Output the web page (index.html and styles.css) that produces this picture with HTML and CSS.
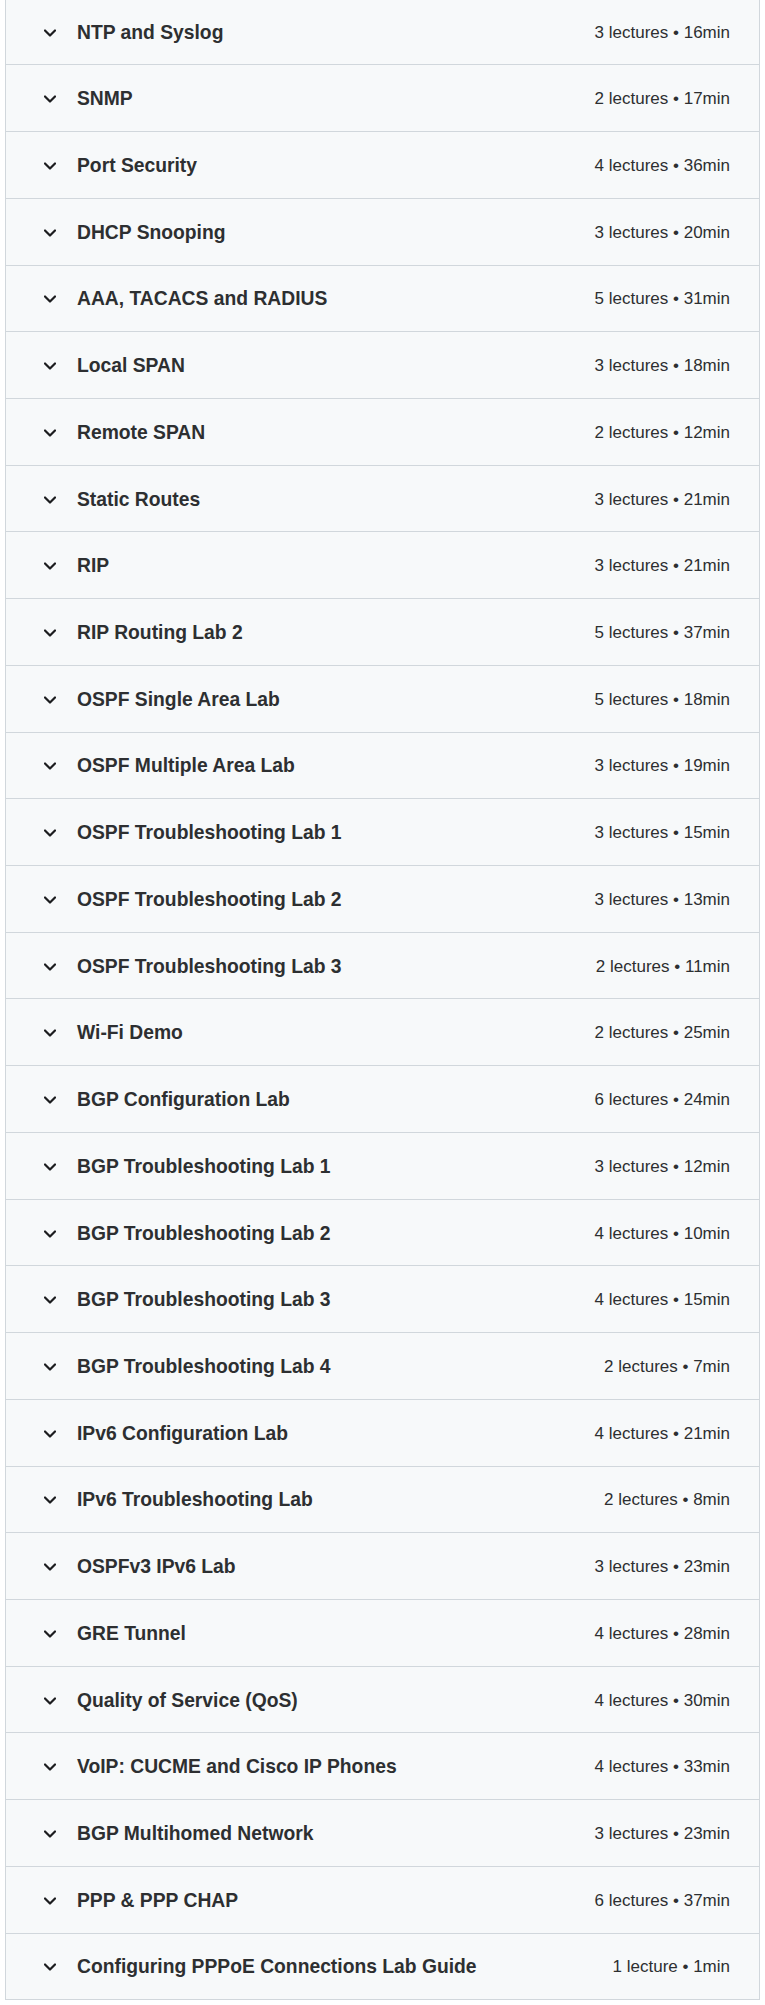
FILE: index.html
```html
<!DOCTYPE html>
<html lang="en">
<head>
<meta charset="utf-8">
<title>Course content</title>
<link rel="stylesheet" href="styles.css">
</head>
<body>
<div class="curriculum">
  <div class="section"><svg class="chev" viewBox="0 0 12 8"><path d="M1 1.5l5 5 5-5"/></svg><span class="title">NTP and Syslog</span><span class="meta">3 lectures • 16min</span></div>
  <div class="section"><svg class="chev" viewBox="0 0 12 8"><path d="M1 1.5l5 5 5-5"/></svg><span class="title">SNMP</span><span class="meta">2 lectures • 17min</span></div>
  <div class="section"><svg class="chev" viewBox="0 0 12 8"><path d="M1 1.5l5 5 5-5"/></svg><span class="title">Port Security</span><span class="meta">4 lectures • 36min</span></div>
  <div class="section"><svg class="chev" viewBox="0 0 12 8"><path d="M1 1.5l5 5 5-5"/></svg><span class="title">DHCP Snooping</span><span class="meta">3 lectures • 20min</span></div>
  <div class="section"><svg class="chev" viewBox="0 0 12 8"><path d="M1 1.5l5 5 5-5"/></svg><span class="title">AAA, TACACS and RADIUS</span><span class="meta">5 lectures • 31min</span></div>
  <div class="section"><svg class="chev" viewBox="0 0 12 8"><path d="M1 1.5l5 5 5-5"/></svg><span class="title">Local SPAN</span><span class="meta">3 lectures • 18min</span></div>
  <div class="section"><svg class="chev" viewBox="0 0 12 8"><path d="M1 1.5l5 5 5-5"/></svg><span class="title">Remote SPAN</span><span class="meta">2 lectures • 12min</span></div>
  <div class="section"><svg class="chev" viewBox="0 0 12 8"><path d="M1 1.5l5 5 5-5"/></svg><span class="title">Static Routes</span><span class="meta">3 lectures • 21min</span></div>
  <div class="section"><svg class="chev" viewBox="0 0 12 8"><path d="M1 1.5l5 5 5-5"/></svg><span class="title">RIP</span><span class="meta">3 lectures • 21min</span></div>
  <div class="section"><svg class="chev" viewBox="0 0 12 8"><path d="M1 1.5l5 5 5-5"/></svg><span class="title">RIP Routing Lab 2</span><span class="meta">5 lectures • 37min</span></div>
  <div class="section"><svg class="chev" viewBox="0 0 12 8"><path d="M1 1.5l5 5 5-5"/></svg><span class="title">OSPF Single Area Lab</span><span class="meta">5 lectures • 18min</span></div>
  <div class="section"><svg class="chev" viewBox="0 0 12 8"><path d="M1 1.5l5 5 5-5"/></svg><span class="title">OSPF Multiple Area Lab</span><span class="meta">3 lectures • 19min</span></div>
  <div class="section"><svg class="chev" viewBox="0 0 12 8"><path d="M1 1.5l5 5 5-5"/></svg><span class="title">OSPF Troubleshooting Lab 1</span><span class="meta">3 lectures • 15min</span></div>
  <div class="section"><svg class="chev" viewBox="0 0 12 8"><path d="M1 1.5l5 5 5-5"/></svg><span class="title">OSPF Troubleshooting Lab 2</span><span class="meta">3 lectures • 13min</span></div>
  <div class="section"><svg class="chev" viewBox="0 0 12 8"><path d="M1 1.5l5 5 5-5"/></svg><span class="title">OSPF Troubleshooting Lab 3</span><span class="meta">2 lectures • 11min</span></div>
  <div class="section"><svg class="chev" viewBox="0 0 12 8"><path d="M1 1.5l5 5 5-5"/></svg><span class="title">Wi-Fi Demo</span><span class="meta">2 lectures • 25min</span></div>
  <div class="section"><svg class="chev" viewBox="0 0 12 8"><path d="M1 1.5l5 5 5-5"/></svg><span class="title">BGP Configuration Lab</span><span class="meta">6 lectures • 24min</span></div>
  <div class="section"><svg class="chev" viewBox="0 0 12 8"><path d="M1 1.5l5 5 5-5"/></svg><span class="title">BGP Troubleshooting Lab 1</span><span class="meta">3 lectures • 12min</span></div>
  <div class="section"><svg class="chev" viewBox="0 0 12 8"><path d="M1 1.5l5 5 5-5"/></svg><span class="title">BGP Troubleshooting Lab 2</span><span class="meta">4 lectures • 10min</span></div>
  <div class="section"><svg class="chev" viewBox="0 0 12 8"><path d="M1 1.5l5 5 5-5"/></svg><span class="title">BGP Troubleshooting Lab 3</span><span class="meta">4 lectures • 15min</span></div>
  <div class="section"><svg class="chev" viewBox="0 0 12 8"><path d="M1 1.5l5 5 5-5"/></svg><span class="title">BGP Troubleshooting Lab 4</span><span class="meta">2 lectures • 7min</span></div>
  <div class="section"><svg class="chev" viewBox="0 0 12 8"><path d="M1 1.5l5 5 5-5"/></svg><span class="title">IPv6 Configuration Lab</span><span class="meta">4 lectures • 21min</span></div>
  <div class="section"><svg class="chev" viewBox="0 0 12 8"><path d="M1 1.5l5 5 5-5"/></svg><span class="title">IPv6 Troubleshooting Lab</span><span class="meta">2 lectures • 8min</span></div>
  <div class="section"><svg class="chev" viewBox="0 0 12 8"><path d="M1 1.5l5 5 5-5"/></svg><span class="title">OSPFv3 IPv6 Lab</span><span class="meta">3 lectures • 23min</span></div>
  <div class="section"><svg class="chev" viewBox="0 0 12 8"><path d="M1 1.5l5 5 5-5"/></svg><span class="title">GRE Tunnel</span><span class="meta">4 lectures • 28min</span></div>
  <div class="section"><svg class="chev" viewBox="0 0 12 8"><path d="M1 1.5l5 5 5-5"/></svg><span class="title">Quality of Service (QoS)</span><span class="meta">4 lectures • 30min</span></div>
  <div class="section"><svg class="chev" viewBox="0 0 12 8"><path d="M1 1.5l5 5 5-5"/></svg><span class="title">VoIP: CUCME and Cisco IP Phones</span><span class="meta">4 lectures • 33min</span></div>
  <div class="section"><svg class="chev" viewBox="0 0 12 8"><path d="M1 1.5l5 5 5-5"/></svg><span class="title">BGP Multihomed Network</span><span class="meta">3 lectures • 23min</span></div>
  <div class="section"><svg class="chev" viewBox="0 0 12 8"><path d="M1 1.5l5 5 5-5"/></svg><span class="title">PPP &amp; PPP CHAP</span><span class="meta">6 lectures • 37min</span></div>
  <div class="section"><svg class="chev" viewBox="0 0 12 8"><path d="M1 1.5l5 5 5-5"/></svg><span class="title">Configuring PPPoE Connections Lab Guide</span><span class="meta">1 lecture • 1min</span></div>
</div>
</body>
</html>
```

FILE: styles.css
```css
html, body {
  margin: 0;
  padding: 0;
  background: #ffffff;
}

body {
  font-family: "Liberation Sans", Arial, sans-serif;
  color: #2d2f31;
  overflow: hidden;
}

.curriculum {
  margin: -1.3px 0 0 5px;
  width: 755px;
  box-sizing: border-box;
  border-left: 1px solid #d1d7dc;
  border-right: 1px solid #d1d7dc;
}

.section {
  display: flex;
  align-items: center;
  height: 66.72px;
  box-sizing: border-box;
  padding: 2px 29px 0 38px;
  background: #f7f9fa;
  border-bottom: 1px solid #d1d7dc;
}

.chev {
  width: 12px;
  height: 8px;
  flex: none;
  fill: none;
  stroke: #1c1d1f;
  stroke-width: 2.2;
  stroke-linecap: round;
  stroke-linejoin: round;
}

.title {
  margin-left: 21px;
  flex: 1;
  font-size: 19.3px;
  font-weight: 700;
}

.meta {
  font-size: 17px;
  font-weight: 400;
  white-space: nowrap;
}
```
